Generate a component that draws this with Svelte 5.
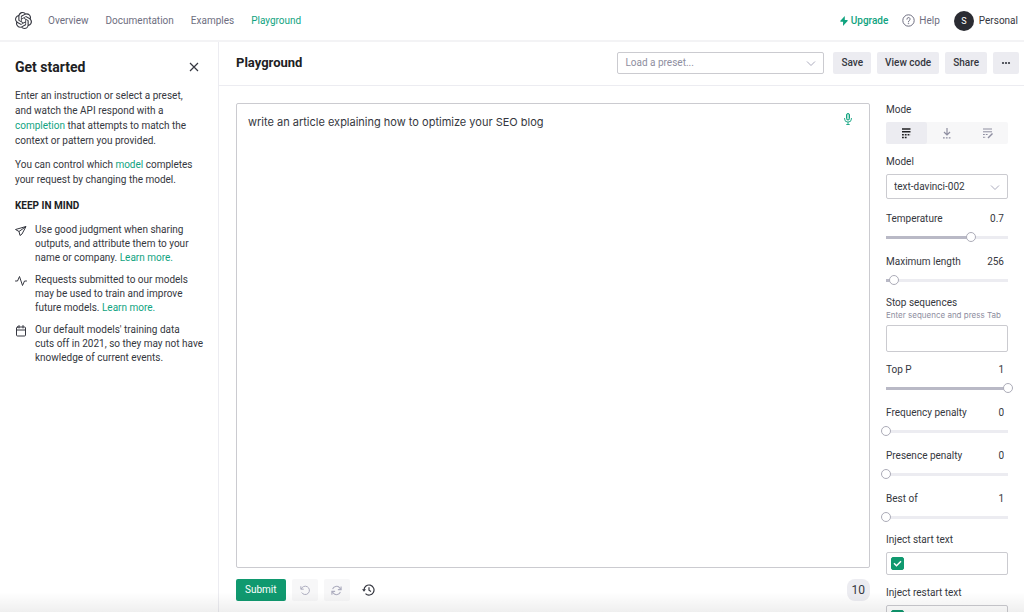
<script>
  const navLinks = [
    { label: 'Overview' },
    { label: 'Documentation' },
    { label: 'Examples' },
    { label: 'Playground', active: true },
  ];

  const modes = [
    { id: 'complete', label: 'Complete' },
    { id: 'insert', label: 'Insert' },
    { id: 'edit', label: 'Edit' },
  ];

  let mode = $state('complete');
  let model = $state('text-davinci-002');
  let preset = $state('');
  let prompt = $state('write an article explaining how to optimize your SEO blog');
  let stop = $state('');
  let injectStart = $state(true);
  let injectRestart = $state(true);
  let startText = $state('');
  let restartText = $state('');
  let showHelp = $state(true);

  let sampling = $state([
    { id: 'temperature', label: 'Temperature', value: 0.7, min: 0, max: 1, step: 0.01 },
    { id: 'max-length', label: 'Maximum length', value: 256, min: 1, max: 4000, step: 1 },
  ]);

  let penalties = $state([
    { id: 'top-p', label: 'Top P', value: 1, min: 0, max: 1, step: 0.01 },
    { id: 'frequency', label: 'Frequency penalty', value: 0, min: 0, max: 2, step: 0.01 },
    { id: 'presence', label: 'Presence penalty', value: 0, min: 0, max: 2, step: 0.01 },
    { id: 'best-of', label: 'Best of', value: 1, min: 1, max: 20, step: 1 },
  ]);

  let tokenCount = $derived(prompt.split(/\s+/).filter(Boolean).length);

  function fill(s) {
    return ((s.value - s.min) / (s.max - s.min)) * 100;
  }
</script>

{#snippet chevron()}
  <svg class="chevron" width="10" height="10" viewBox="0 0 10 10" fill="none" aria-hidden="true">
    <path d="M1 2.500l4 4 4-4" stroke="#acacbe" stroke-width="1" />
  </svg>
{/snippet}

{#snippet slider(s)}
  <div class="slider">
    <div class="slider-head">
      <label for={s.id}>{s.label}</label>
      <input class="value" type="text" aria-label="{s.label} value" bind:value={s.value} />
    </div>
    <input
      id={s.id}
      class="range"
      type="range"
      min={s.min}
      max={s.max}
      step={s.step}
      bind:value={s.value}
      style="--fill: {fill(s)}%"
    />
  </div>
{/snippet}

<div class="app">
  <header class="topbar">
    <a class="logo" href="#home" aria-label="Home">
      <svg width="17" height="17" viewBox="0 0 24 24" fill="#353740">
        <path d="M22.2819 9.8211a5.9847 5.9847 0 0 0-.5157-4.9108 6.0462 6.0462 0 0 0-6.5098-2.9A6.0651 6.0651 0 0 0 4.9807 4.1818a5.9847 5.9847 0 0 0-3.9977 2.9 6.0462 6.0462 0 0 0 .7427 7.0966 5.98 5.98 0 0 0 .511 4.9107 6.051 6.051 0 0 0 6.5146 2.9001A5.9847 5.9847 0 0 0 13.2599 24a6.0557 6.0557 0 0 0 5.7718-4.2058 5.9894 5.9894 0 0 0 3.9977-2.9001 6.0557 6.0557 0 0 0-.7475-7.0729zm-9.022 12.6081a4.4755 4.4755 0 0 1-2.8764-1.0408l.1419-.0804 4.7783-2.7582a.7948.7948 0 0 0 .3927-.6813v-6.7369l2.02 1.1686a.071.071 0 0 1 .038.052v5.5826a4.504 4.504 0 0 1-4.4945 4.4944zm-9.6607-4.1254a4.4708 4.4708 0 0 1-.5346-3.0137l.142.0852 4.783 2.7582a.7712.7712 0 0 0 .7806 0l5.8428-3.3685v2.3324a.0804.0804 0 0 1-.0332.0615L9.74 19.9502a4.4992 4.4992 0 0 1-6.1408-1.6464zM2.3408 7.8956a4.485 4.485 0 0 1 2.3655-1.9728V11.6a.7664.7664 0 0 0 .3879.6765l5.8144 3.3543-2.0201 1.1685a.0757.0757 0 0 1-.071 0l-4.8303-2.7865A4.504 4.504 0 0 1 2.3408 7.872zm16.5963 3.8558L13.1038 8.364 15.1192 7.2a.0757.0757 0 0 1 .071 0l4.8303 2.7913a4.4944 4.4944 0 0 1-.6765 8.1042v-5.6772a.79.79 0 0 0-.407-.667zm2.0107-3.0231l-.142-.0852-4.7735-2.7818a.7759.7759 0 0 0-.7854 0L9.409 9.2297V6.8974a.0662.0662 0 0 1 .0284-.0615l4.8303-2.7866a4.4992 4.4992 0 0 1 6.6802 4.66zM8.3065 12.863l-2.02-1.1638a.0804.0804 0 0 1-.038-.0567V6.0742a4.4992 4.4992 0 0 1 7.3757-3.4537l-.142.0805L8.704 5.459a.7948.7948 0 0 0-.3927.6813zm1.0976-2.3654l2.602-1.4998 2.6069 1.4998v2.9994l-2.5974 1.4997-2.6067-1.4997Z" />
      </svg>
    </a>
    <nav class="links">
      {#each navLinks as link}
        <a href="#{link.label.toLowerCase()}" class:active={link.active}>{link.label}</a>
      {/each}
    </nav>
    <div class="account">
      <a class="upgrade" href="#upgrade">
        <svg width="8" height="10" viewBox="0 0 8 10" fill="#10a37f" aria-hidden="true">
          <path d="M4.8 0L.4 4.8v1h2.7L3 10l4.6-5v-1H4.8z" />
        </svg>
        Upgrade
      </a>
      <a class="help" href="#help">
        <svg width="13" height="13" viewBox="0 0 13 13" fill="none" stroke="#6e6e80" aria-hidden="true">
          <circle cx="6.5" cy="6.5" r="5.7" />
          <path d="M4.9 5.2a1.6 1.6 0 1 1 2.3 1.4c-.5.3-.7.5-.7 1.1" stroke-linecap="round" />
          <circle cx="6.5" cy="9.4" r=".3" />
        </svg>
        Help
      </a>
      <button class="profile" type="button">
        <span class="avatar">S</span>
        Personal
      </button>
    </div>
  </header>

  <div class="body">
    {#if showHelp}
      <aside class="guide">
        <div class="guide-head">
          <h2>Get started</h2>
          <button class="close" type="button" aria-label="Close" onclick={() => (showHelp = false)}>
            <svg width="10" height="10" viewBox="0 0 10 10" stroke="#353740" stroke-width="1.2">
              <path d="M1 1l8 8M9 1l-8 8" />
            </svg>
          </button>
        </div>
        <p>
          Enter an instruction or select a preset, and watch the API respond with a
          <a href="#completion">completion</a> that attempts to match the context or pattern you provided.
        </p>
        <p>You can control which <a href="#model">model</a> completes your request by changing the model.</p>
        <h3>KEEP IN MIND</h3>
        <ul>
          <li>
            <svg width="12" height="12" viewBox="0 0 24 24" fill="none" stroke="#353740" stroke-width="2" stroke-linejoin="round" aria-hidden="true">
              <path d="M22 3L1 9l7 4 2 8 4-3z" />
              <path d="M22 3L8 13" />
            </svg>
            <span>Use good judgment when sharing outputs, and attribute them to your name or company. <a href="#sharing">Learn more.</a></span>
          </li>
          <li>
            <svg width="12" height="12" viewBox="0 0 24 24" fill="none" stroke="#353740" stroke-width="2" stroke-linecap="round" stroke-linejoin="round" aria-hidden="true">
              <path d="M1 12h4L9 3l6 18 4-9h4" />
            </svg>
            <span>Requests submitted to our models may be used to train and improve future models. <a href="#data">Learn more.</a></span>
          </li>
          <li>
            <svg width="12" height="12" viewBox="0 0 24 24" fill="none" stroke="#353740" stroke-width="2" stroke-linecap="round" stroke-linejoin="round" aria-hidden="true">
              <rect x="3" y="4" width="18" height="18" rx="2" />
              <path d="M3 10h18M8 1v5M16 1v5" />
            </svg>
            <span>Our default models' training data<br />cuts off in 2021, so they may not have knowledge of current events.</span>
          </li>
        </ul>
      </aside>
    {/if}

    <main class="playground">
      <div class="toolbar">
        <h1>Playground</h1>
        <div class="select preset">
          <select aria-label="Load a preset" bind:value={preset}>
            <option value="">Load a preset...</option>
            <option value="qa">Q&amp;A</option>
            <option value="summarize">Summarize for a 2nd grader</option>
          </select>
          {@render chevron()}
        </div>
        <div class="actions">
          <button class="btn" type="button">Save</button>
          <button class="btn" type="button">View code</button>
          <button class="btn" type="button">Share</button>
          <button class="btn" type="button" aria-label="More">
            <svg width="10" height="4" viewBox="0 0 10 4" fill="#353740">
              <circle cx="2" cy="2" r="1.1" />
              <circle cx="5" cy="2" r="1.1" />
              <circle cx="8" cy="2" r="1.1" />
            </svg>
          </button>
        </div>
      </div>

      <div class="workspace">
        <section class="editor">
          <div class="prompt">
            <textarea aria-label="Prompt" spellcheck="false" bind:value={prompt}></textarea>
            <button class="mic" type="button" aria-label="Dictate">
              <svg width="8" height="12" viewBox="0 0 8 12" fill="none" stroke="#10a37f">
                <rect x="2.5" y=".5" width="3" height="6.5" rx="1.5" fill="#10a37f" fill-opacity=".35" />
                <path d="M.6 5v1a3.4 3.1 0 0 0 6.8 0V5M4 9v2.500M2.300 11.500h3.400" stroke-width=".9" />
              </svg>
            </button>
          </div>
          <div class="submit-row">
            <button class="submit" type="button">Submit</button>
            <button class="tool" type="button" aria-label="Undo" disabled>
              <svg width="10" height="10" viewBox="0 0 24 24" fill="none" stroke="#acacbe" stroke-width="2.4">
                <path d="M2 3v7h7" />
                <path d="M3 10a10 10 0 1 1 1 8" />
              </svg>
            </button>
            <button class="tool" type="button" aria-label="Regenerate" disabled>
              <svg width="11" height="11" viewBox="0 0 24 24" fill="none" stroke="#acacbe" stroke-width="2.4">
                <path d="M22 3v7h-7M2 21v-7h7" />
                <path d="M3.500 9a9 9 0 0 1 15-3.400L22 10M2 14l3.500 4.400a9 9 0 0 0 15-3.400" />
              </svg>
            </button>
            <button class="tool history" type="button" aria-label="History">
              <svg width="13" height="12" viewBox="0 0 13 12" fill="none" stroke="#353740" stroke-width="1.2">
                <path d="M2 6a5 5 0 1 1 1.500 3.600" />
                <path d="M0 5.200h4L2 7.800z" fill="#353740" stroke="none" />
                <path d="M7 3.200V6.200l2 1.200" />
              </svg>
            </button>
            <span class="tokens">{tokenCount}</span>
          </div>
        </section>

        <section class="params">
          <span class="name">Mode</span>
          <div class="modes">
            {#each modes as m}
              <button
                type="button"
                aria-label={m.label}
                aria-pressed={mode === m.id}
                class:active={mode === m.id}
                onclick={() => (mode = m.id)}
              >
                {#if m.id === 'complete'}
                  <svg width="10" height="11" viewBox="0 0 10 11" fill="none" stroke="currentColor" stroke-width="1.5">
                    <path d="M1 1h8.500M1 3.800h8.500" />
                    <path d="M1 6.800h8.500M1 9.500h5" stroke-dasharray="1.8 1" />
                  </svg>
                {:else if m.id === 'insert'}
                  <svg width="10" height="11" viewBox="0 0 10 11" fill="none" stroke="currentColor" stroke-width="1.2">
                    <path d="M5 0v7M2 4l3 3 3-3" />
                    <path d="M1 9.800h8.500" stroke-dasharray="1.7 1.2" />
                  </svg>
                {:else}
                  <svg width="11" height="11" viewBox="0 0 11 11" fill="none" stroke="currentColor">
                    <path d="M1 1h9M1 3.800h9" />
                    <path d="M1 6.500h5M1 9.300h3" stroke-dasharray="1.8 1" />
                    <path d="M6 10l4.500-4.500" stroke-width="1.5" />
                  </svg>
                {/if}
              </button>
            {/each}
          </div>

          <label class="name" for="model">Model</label>
          <div class="select model">
            <select id="model" bind:value={model}>
              <option>text-davinci-002</option>
              <option>text-curie-001</option>
              <option>text-babbage-001</option>
            </select>
            {@render chevron()}
          </div>

          {#each sampling as s (s.id)}
            {@render slider(s)}
          {/each}

          <label class="name after-slider" for="stop">Stop sequences <small>Enter sequence and press Tab</small></label>
          <input id="stop" class="field tall" type="text" bind:value={stop} />

          {#each penalties as s (s.id)}
            {@render slider(s)}
          {/each}

          <label class="name after-slider" for="start-text">Inject start text</label>
          <div class="field">
            <input type="checkbox" aria-label="Enable start text" bind:checked={injectStart} />
            <input id="start-text" type="text" bind:value={startText} />
          </div>

          <label class="name" for="restart-text">Inject restart text</label>
          <div class="field">
            <input type="checkbox" aria-label="Enable restart text" bind:checked={injectRestart} />
            <input id="restart-text" type="text" bind:value={restartText} />
          </div>
        </section>
      </div>
    </main>
  </div>
</div>

<style>
  :global(body) {
    margin: 0;
    background: #fff;
  }

  .app {
    position: relative;
    display: flex;
    flex-direction: column;
    height: 100vh;
    overflow: hidden;
    color: #353740;
    font-family: Roboto, "Liberation Sans", sans-serif;
    font-size: 10px;
    line-height: 14px;
  }

  .app::after {
    content: '';
    position: absolute;
    inset: auto 0 0;
    height: 20px;
    background: linear-gradient(transparent, #00000010);
    pointer-events: none;
  }

  .app * {
    box-sizing: border-box;
  }

  button,
  input,
  select,
  textarea {
    margin: 0;
    padding: 0;
    border: 0;
    background: none;
    color: inherit;
    font: inherit;
  }

  button {
    cursor: pointer;
  }

  svg {
    display: block;
    flex-shrink: 0;
  }

  a {
    color: #10a37f;
    text-decoration: none;
  }

  h1,
  h2,
  h3,
  p,
  ul {
    margin: 0;
    padding: 0;
  }

  .topbar {
    display: flex;
    align-items: center;
    flex-shrink: 0;
    height: 42px;
    padding: 1px 6px 0 15px;
    border-bottom: 2px solid #f3f3f5;
  }

  .links {
    display: flex;
    gap: 17px;
    margin-left: 16px;
  }

  .links a {
    color: #6e6e80;
  }

  .links a.active {
    color: #10a37f;
  }

  .account {
    display: flex;
    align-items: center;
    gap: 14px;
    margin-left: auto;
  }

  .upgrade,
  .help,
  .profile {
    display: flex;
    align-items: center;
    gap: 4px;
  }

  .upgrade {
    gap: 3px;
    font-weight: 500;
  }

  .help {
    color: #6e6e80;
  }

  .profile {
    gap: 5px;
  }

  .avatar {
    display: flex;
    align-items: center;
    justify-content: center;
    width: 20px;
    height: 20px;
    border-radius: 50%;
    background: #2b2c33;
    color: #fff;
    font-size: 9px;
  }

  .body {
    display: flex;
    flex: 1;
    min-height: 0;
  }

  .guide {
    flex: 0 0 219px;
    padding: 16px 12px 16px 15px;
    border-right: 1px solid #ececf1;
  }

  .guide-head {
    display: flex;
    align-items: center;
    justify-content: space-between;
    margin-bottom: 12px;
    padding-right: 7px;
  }

  h2 {
    font-size: 14px;
    line-height: 18px;
    font-weight: 700;
    color: #202123;
  }

  .guide p {
    margin-bottom: 9px;
    padding-right: 11px;
    line-height: 15px;
  }

  h3 {
    margin: 12px 0 10px;
    font-size: 10px;
    line-height: 14px;
    font-weight: 700;
    color: #202123;
  }

  ul {
    display: flex;
    flex-direction: column;
    gap: 8px;
    list-style: none;
  }

  li {
    display: flex;
    gap: 8px;
  }

  li svg {
    margin-top: 2px;
  }

  .playground {
    display: flex;
    flex: 1;
    flex-direction: column;
    min-width: 0;
  }

  .toolbar {
    display: flex;
    align-items: center;
    flex-shrink: 0;
    height: 44px;
    padding: 0 5px 1px 17px;
    border-bottom: 1px solid #ececf1;
  }

  h1 {
    flex: 1;
    font-size: 13px;
    line-height: 18px;
    font-weight: 700;
    color: #202123;
  }

  .select {
    position: relative;
    border: 1px solid #cbcbd0;
    border-radius: 2px;
  }

  .select select {
    display: block;
    width: 100%;
    height: 100%;
    padding: 0 24px 0 7px;
    appearance: none;
  }

  .chevron {
    position: absolute;
    top: 50%;
    right: 7px;
    margin-top: -4px;
    pointer-events: none;
  }

  .preset {
    flex: 0 1 207px;
    height: 22px;
    color: #8e8ea0;
  }

  .actions {
    display: flex;
    gap: 6px;
    margin-left: 9px;
  }

  .btn {
    height: 22px;
    padding: 0 8px;
    border-radius: 2px;
    background: #ececf1;
    font-weight: 500;
  }

  .workspace {
    display: flex;
    flex: 1;
    min-height: 0;
    padding-left: 17px;
  }

  .editor {
    display: flex;
    flex: 1;
    flex-direction: column;
    min-width: 0;
    padding: 17px 0 11px;
  }

  .prompt {
    position: relative;
    display: flex;
    flex: 1;
  }

  textarea {
    flex: 1;
    padding: 9px 40px 9px 11px;
    border: 1px solid #cbcbd0;
    border-radius: 2px;
    font-family: Inter, "Liberation Sans", sans-serif;
    font-size: 11px;
    line-height: 18px;
    resize: none;
  }

  .mic {
    position: absolute;
    top: 10px;
    right: 18px;
  }

  .submit-row {
    display: flex;
    align-items: center;
    gap: 6px;
    margin-top: 11px;
  }

  .submit {
    height: 22px;
    padding: 0 9px;
    border-radius: 2px;
    background: #10996f;
    color: #fff;
  }

  .tool {
    display: flex;
    align-items: center;
    justify-content: center;
    width: 26px;
    height: 22px;
    border-radius: 2px;
    background: #f7f7f8;
  }

  .tool.history {
    background: none;
  }

  .tokens {
    min-width: 22px;
    margin-left: auto;
    padding: 4px 5px;
    border-radius: 8px;
    background: #ececf1;
    font-size: 12px;
    line-height: 14px;
    text-align: center;
  }

  .params {
    flex: 0 0 154px;
    padding: 17px 16px 20px;
    overflow: hidden;
  }

  .name {
    display: block;
    margin-bottom: 5px;
  }

  .name small {
    display: block;
    font-family: Inter, "Liberation Sans", sans-serif;
    font-size: 8px;
    line-height: 10px;
    color: #8e8ea0;
  }

  .modes {
    display: flex;
    margin-bottom: 11px;
    background: #f7f7f8;
    border-radius: 2px;
  }

  .modes button {
    display: flex;
    flex: 1;
    align-items: center;
    justify-content: center;
    height: 22px;
    color: #8e8ea0;
  }

  .modes .active {
    background: #ececf1;
    border-radius: 2px;
    color: #202123;
  }

  .model {
    height: 25px;
    margin-bottom: 13px;
  }

  .slider {
    margin-bottom: 12px;
  }

  .slider-head {
    display: flex;
    margin-bottom: 5px;
  }

  .value {
    flex: 1;
    min-width: 0;
    padding-right: 4px;
    text-align: right;
  }

  .range {
    display: block;
    width: calc(100% + 10px);
    height: 12px;
    margin: 0 -5px;
    appearance: none;
    background: linear-gradient(to right, #b9b9c6 var(--fill), #ececf1 var(--fill)) center / calc(100% - 10px) 3px no-repeat;
  }

  .range::-webkit-slider-thumb {
    appearance: none;
    box-sizing: border-box;
    width: 10px;
    height: 10px;
    border: 1px solid #acacb8;
    border-radius: 50%;
    background: #fff;
  }

  .after-slider {
    margin-top: -2px;
  }

  .field {
    display: flex;
    align-items: center;
    gap: 4px;
    width: 100%;
    height: 23px;
    margin-bottom: 11px;
    padding: 0 4px;
    border: 1px solid #cbcbd0;
    border-radius: 2px;
  }

  .field.tall {
    display: block;
    height: 27px;
  }

  .field input[type='text'] {
    flex: 1;
    min-width: 0;
  }

  input[type='checkbox'] {
    width: 13px;
    height: 13px;
    appearance: none;
    border: 1px solid #cbcbd0;
    border-radius: 2px;
  }

  input[type='checkbox']:checked {
    border-color: #10996f;
    background: #10996f url("data:image/svg+xml,%3Csvg xmlns='http://www.w3.org/2000/svg' viewBox='0 0 11 11' fill='none' stroke='white' stroke-width='1.5'%3E%3Cpath d='M2 5.300l2.500 2.500L9 3.300'/%3E%3C/svg%3E") center / 11px no-repeat;
  }
</style>
